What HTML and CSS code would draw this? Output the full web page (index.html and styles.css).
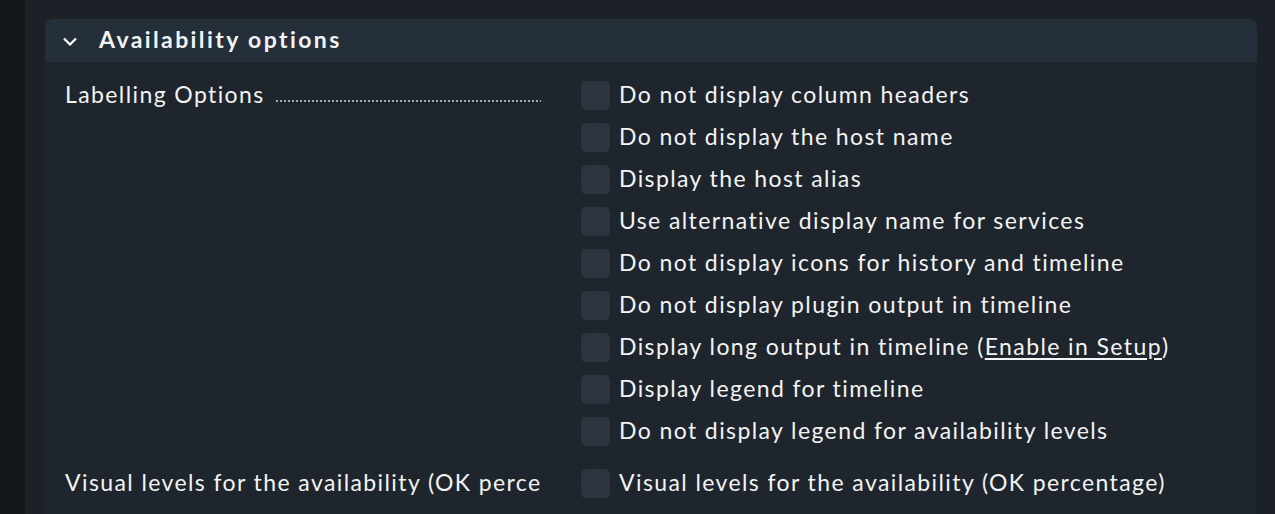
FILE: index.html
```html
<!DOCTYPE html>
<html>
<head>
<meta charset="utf-8">
<link rel="stylesheet" href="styles.css">
</head>
<body>
<div class="sidebar"></div>
<div class="main">
  <div class="panel">
    <div class="panel-head">
      <svg class="chev" width="14" height="9" viewBox="0 0 14 9"><path d="M1 1.5 L7 7.5 L13 1.5" fill="none" stroke="#ffffff" stroke-width="2.2"/></svg>
      <span class="title">Availability options</span>
    </div>
    <div class="panel-body">
      <div class="row">
        <div class="label"><span>Labelling Options</span><span class="leader"></span></div>
        <div class="choices">
          <div class="choice"><span class="cb"></span>Do not display column headers</div>
          <div class="choice"><span class="cb"></span>Do not display the host name</div>
          <div class="choice"><span class="cb"></span>Display the host alias</div>
          <div class="choice"><span class="cb"></span>Use alternative display name for services</div>
          <div class="choice"><span class="cb"></span>Do not display icons for history and timeline</div>
          <div class="choice"><span class="cb"></span>Do not display plugin output in timeline</div>
          <div class="choice"><span class="cb"></span>Display long output in timeline (<a class="link" href="#">Enable in Setup</a>)</div>
          <div class="choice"><span class="cb"></span>Display legend for timeline</div>
          <div class="choice"><span class="cb"></span>Do not display legend for availability levels</div>
        </div>
      </div>
      <div class="row">
        <div class="label"><span>Visual levels for the availability (OK percentage)</span></div>
        <div class="choices">
          <div class="choice"><span class="cb"></span>Visual levels for the availability (OK percentage)</div>
        </div>
      </div>
      <div class="row">
        <div class="label"><span>Consider periods of flapping states</span></div>
        <div class="choices">
          <div class="choice"><span class="cb"></span>Consider periods of flapping states</div>
        </div>
      </div>
    </div>
  </div>
</div>
</body>
</html>
```
FILE: styles.css
```css
html, body {
  margin: 0;
  padding: 0;
  height: 100%;
  overflow: hidden;
}
body {
  background: #13181d;
  display: flex;
  font-family: Lato, "Open Sans", sans-serif;
  color: #f2f3f4;
  font-size: 23px;
}
.sidebar {
  width: 25px;
  flex: none;
}
.main {
  flex: 1;
  background: #1c2128;
  padding: 19px 18px 0 20px;
}
.panel {
  background: #1f252c;
  border-radius: 8px 8px 0 0;
  min-height: 600px;
}
.panel-head {
  height: 43px;
  background: #252f3a;
  border-radius: 8px 8px 0 0;
  display: flex;
  align-items: center;
  padding-left: 18px;
}
.chev {
  display: block;
  margin-right: 22px;
  margin-top: 2px;
}
.title {
  font-weight: 700;
  letter-spacing: 2.4px;
  margin-top: -4px;
}
.panel-body {
  padding: 11px 20px 0 20px;
}
.row {
  display: grid;
  grid-template-columns: 476px 1fr;
  column-gap: 40px;
  margin-bottom: 10px;
}
.label {
  display: flex;
  align-items: center;
  height: 42px;
  white-space: nowrap;
  overflow: hidden;
  letter-spacing: 1.4px;
}
.leader {
  flex: 1;
  height: 2px;
  margin-left: 11px;
  margin-right: -2px;
  margin-top: 14px;
  background: repeating-linear-gradient(to right, #a3aab2 0 2px, transparent 2px 4px);
}
.choices {
  display: flex;
  flex-direction: column;
}
.choice {
  display: flex;
  align-items: center;
  height: 42px;
  white-space: nowrap;
  letter-spacing: 1.4px;
}
.cb {
  width: 29px;
  height: 29px;
  border-radius: 5px;
  background: #2c3440;
  margin-right: 9px;
  margin-top: 3px;
  flex: none;
}
.link {
  color: #f2f3f4;
  text-decoration: underline;
  text-underline-offset: 3px;
}
```
